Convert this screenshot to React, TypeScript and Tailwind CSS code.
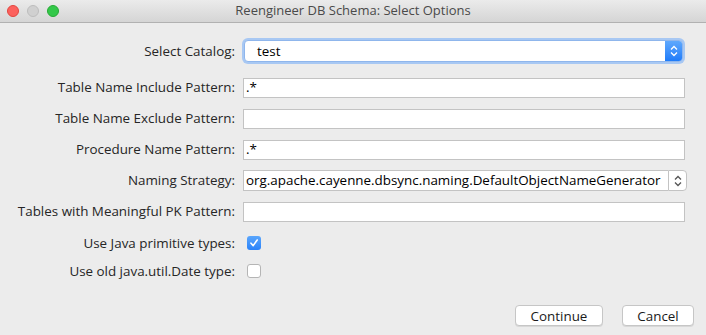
import React from "react";

const FONT = { fontFamily: '"Open Sans", "DejaVu Sans", sans-serif' };

function Chevrons({ color }: { color: string }) {
  return (
    <svg width="8" height="12" viewBox="0 0 8 12" fill="none" stroke={color} strokeWidth={1.3}>
      <path d="M1 4.5 L4 1.5 L7 4.5" />
      <path d="M1 7.5 L4 10.5 L7 7.5" />
    </svg>
  );
}

function TextRow({ label, value }: { label: string; value?: string }) {
  return (
    <div className="flex items-center h-[31px]">
      <div className="w-[235px] text-right text-[13.4px] text-[#262626]">{label}</div>
      <div className="ml-[8px] mr-[21px] flex-1 h-[20px] bg-white border border-[#c3c3c3] flex items-center px-[2px] text-[13.4px] text-black">
        {value}
      </div>
    </div>
  );
}

function CheckRow({ label, checked }: { label: string; checked: boolean }) {
  return (
    <div className="flex items-center h-[28px]">
      <div className="w-[235px] text-right text-[13.4px] text-[#262626]">{label}</div>
      <div className="ml-[12px]">
        {checked ? (
          <div className="w-[14px] h-[14px] rounded-[3px] bg-gradient-to-b from-[#5aa6fc] to-[#2a82f9] flex items-center justify-center">
            <svg width="10" height="10" viewBox="0 0 10 10" fill="none" stroke="white" strokeWidth={1.6}>
              <path d="M2 5.2 L4.2 7.6 L8.2 2" strokeLinecap="round" strokeLinejoin="round" />
            </svg>
          </div>
        ) : (
          <div className="w-[14px] h-[14px] rounded-[3px] bg-white border border-[#b5b5b5]" />
        )}
      </div>
    </div>
  );
}

export default function App() {
  return (
    <div className="w-[706px] h-[335px] bg-[#ececec] flex flex-col overflow-hidden" style={FONT}>
      {/* Title bar */}
      <div className="h-[23px] bg-gradient-to-b from-[#ebebeb] to-[#d5d5d5] border-b border-[#b1b1b1] flex items-center relative">
        <div className="flex items-center gap-[8px] pl-[7px]">
          <span className="w-[12px] h-[12px] rounded-full bg-[#fc615d] border border-[#e2463f]" />
          <span className="w-[12px] h-[12px] rounded-full bg-[#d0d0d0] border border-[#bdbdbd]" />
          <span className="w-[12px] h-[12px] rounded-full bg-[#34c84a] border border-[#27aa35]" />
        </div>
        <div className="absolute inset-0 flex items-center justify-center text-[13px] text-[#4a4a4a]">
          Reengineer DB Schema: Select Options
        </div>
      </div>

      {/* Form */}
      <div className="flex flex-col pt-[14px]">
        <div className="flex items-center h-[28px]">
          <div className="w-[235px] text-right text-[13.4px] text-[#262626]">Select Catalog:</div>
          <div className="ml-[9px] mr-[23px] flex-1 h-[22px] rounded-[4px] bg-white border border-[#8fb6ec] shadow-[0_0_0_2px_#a8c8f3] flex items-center overflow-hidden">
            <span className="flex-1 pl-[12px] text-[13.4px] text-black">test</span>
            <div className="w-[17px] h-full bg-gradient-to-b from-[#5ea8fd] to-[#1d7bf9] flex items-center justify-center">
              <Chevrons color="white" />
            </div>
          </div>
        </div>
        <div className="h-[7px]" />
        <TextRow label="Table Name Include Pattern:" value=".*" />
        <TextRow label="Table Name Exclude Pattern:" />
        <TextRow label="Procedure Name Pattern:" value=".*" />
        <div className="flex items-center h-[31px]">
          <div className="w-[235px] text-right text-[13.4px] text-[#262626]">Naming Strategy:</div>
          <div className="ml-[8px] mr-[19px] flex-1 h-[21px] flex items-center">
            <div className="flex-1 h-full bg-white border border-[#c3c3c3] border-r-0 flex items-center px-[2px] text-[13.4px] text-black whitespace-nowrap overflow-hidden">
              org.apache.cayenne.dbsync.naming.DefaultObjectNameGenerator
            </div>
            <div className="w-[19px] h-full bg-white border border-[#c3c3c3] rounded-r-[4px] flex items-center justify-center">
              <Chevrons color="#555" />
            </div>
          </div>
        </div>
        <TextRow label="Tables with Meaningful PK Pattern:" />
        <div className="h-[2px]" />
        <CheckRow label="Use Java primitive types:" checked={true} />
        <CheckRow label="Use old java.util.Date type:" checked={false} />
      </div>

      {/* Buttons */}
      <div className="flex justify-end gap-[19px] pr-[12px] mt-[20px]">
        <button className="w-[88px] h-[21px] bg-white border border-[#c6c6c6] rounded-[4px] text-[13.4px] text-[#1a1a1a] shadow-[0_1px_0_#d8d8d8]">
          Continue
        </button>
        <button className="w-[72px] h-[21px] bg-white border border-[#c6c6c6] rounded-[4px] text-[13.4px] text-[#1a1a1a] shadow-[0_1px_0_#d8d8d8]">
          Cancel
        </button>
      </div>
    </div>
  );
}
